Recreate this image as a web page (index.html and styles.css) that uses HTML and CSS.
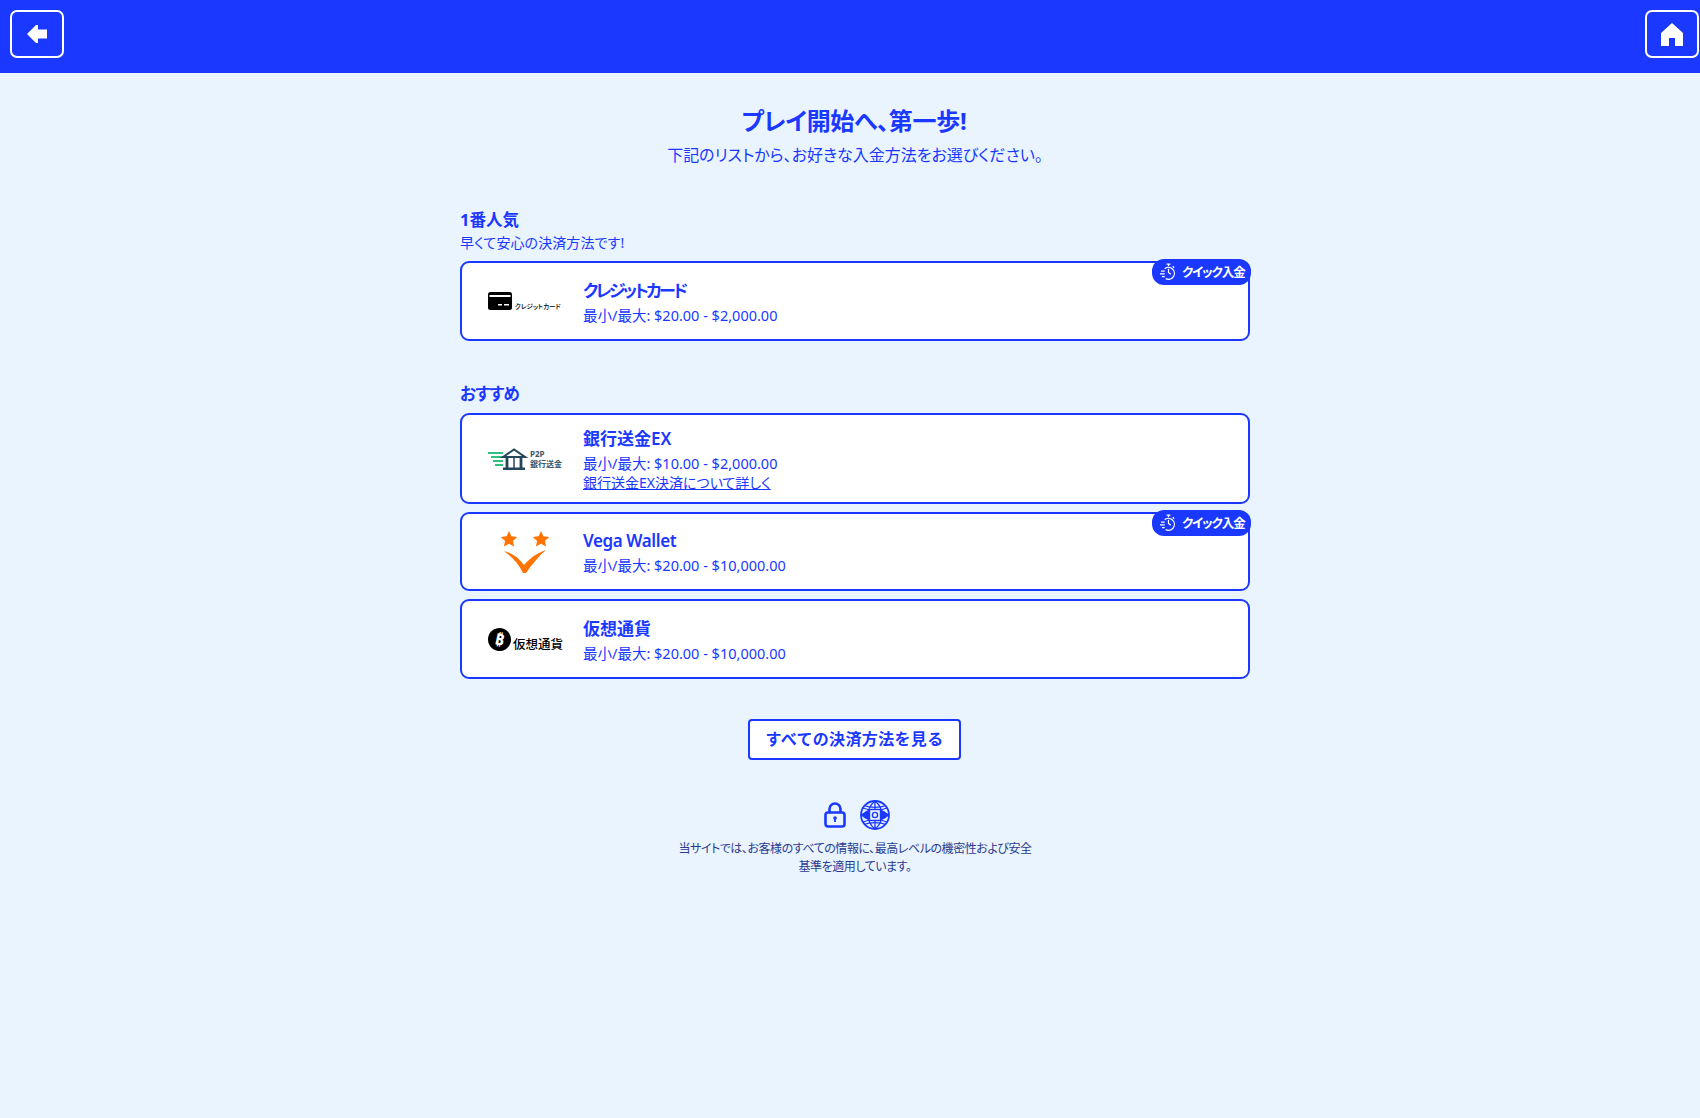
FILE: index.html
```html
<!DOCTYPE html>
<html lang="ja">
<head>
<meta charset="utf-8">
<title>入金方法</title>
<link rel="stylesheet" href="styles.css">
</head>
<body>
<header class="topbar">
  <a class="navbtn" href="#" aria-label="戻る">
    <svg class="back-icon" viewBox="0 0 20 18"><path d="M0 9 9 0h2v4.500h9v9h-9V18H9z"/></svg>
  </a>
  <a class="navbtn" href="#" aria-label="ホーム">
    <svg class="home-icon" viewBox="0 0 22 23"><path d="M11 0 22 10v13H14v-8H8v8H0V10z"/></svg>
  </a>
</header>
<main class="content">
  <section class="intro">
    <h1 class="intro-title">プレイ開始へ、第一歩!</h1>
    <p class="intro-sub">下記のリストから、お好きな入金方法をお選びください。</p>
  </section>

  <section class="group group-first">
    <h2 class="group-title">1番人気</h2>
    <p class="group-sub">早くて安心の決済方法です!</p>
    <div class="cards">
      <article class="card">
        <div class="logo">
          <div class="logo-card">
            <svg class="card-svg" viewBox="0 0 24 18"><rect width="24" height="18" rx="2.500" fill="#000"/><rect x="1.500" y="3" width="21" height="2" fill="#fff"/><rect x="10" y="12" width="4" height="1.500" fill="#fff"/><rect x="16" y="12" width="5" height="1.500" fill="#fff"/></svg>
            <span class="logo-card-text">クレジットカード</span>
          </div>
        </div>
        <div class="info">
          <h3 class="name name-kana">クレジットカード</h3>
          <p class="range">最小/最大: $20.00 - $2,000.00</p>
        </div>
        <span class="badge">
          <svg class="badge-icon" viewBox="0 0 18 18" fill="none" stroke="#fff" stroke-width="1.300"><path d="M7 1.200h4M9 1.200V3.500M13.500 3.500l1.500 1.500"/><path d="M5 6a6.300 6.300 0 1 1 1 10.500"/><path d="M9 6v4l2.500 2"/><path d="M1 8.500h4M0 11.500h5M2 14.500h3"/></svg>
          クイック入金
        </span>
      </article>
    </div>
  </section>

  <section class="group group-rec">
    <h2 class="group-title">おすすめ</h2>
    <div class="cards">
      <article class="card card-tall">
        <div class="logo">
          <div class="logo-bank">
            <svg class="bank-svg" viewBox="0 0 40 22"><g fill="#2fbf7f"><rect x="0" y="4" width="15" height="2"/><rect x="3" y="8" width="12" height="2"/><rect x="5" y="12" width="10" height="2"/><rect x="7" y="16" width="8" height="2"/></g><path d="M15 9 26 1.500 37 9z" fill="none" stroke="#24455a" stroke-width="2"/><path d="M19 10v10M33 10v10" stroke="#24455a" stroke-width="2.800"/><path d="M26 10v10" stroke="#24455a" stroke-width="1.500"/><rect x="15" y="19.500" width="22" height="2.500" fill="#24455a"/></svg>
            <span class="bank-text"><b>P2P</b><b>銀行送金</b></span>
          </div>
        </div>
        <div class="info">
          <h3 class="name">銀行送金EX</h3>
          <p class="range">最小/最大: $10.00 - $2,000.00</p>
          <a class="more" href="#">銀行送金EX決済について詳しく</a>
        </div>
      </article>
      <article class="card card-vega">
        <div class="logo">
          <svg class="vega-svg" viewBox="0 0 48 42" fill="#ff7300"><path d="M8 0l2.400 5.300 5.800.7-4.300 3.900 1.200 5.700L8 12.700l-5.100 2.900 1.200-5.700L-.2 6l5.800-.7z"/><path d="M40 0l2.400 5.300 5.800.7-4.300 3.900 1.200 5.700L40 12.700l-5.100 2.900 1.200-5.700L31.800 6l5.800-.7z"/><path d="M3 20c8 2 15 7 20 14 6-7 13-12 22-15-7 6-14 14-20 23h-3C18 33 11 26 3 20z"/></svg>
        </div>
        <div class="info">
          <h3 class="name name-latin">Vega Wallet</h3>
          <p class="range">最小/最大: $20.00 - $10,000.00</p>
        </div>
        <span class="badge">
          <svg class="badge-icon" viewBox="0 0 18 18" fill="none" stroke="#fff" stroke-width="1.300"><path d="M7 1.200h4M9 1.200V3.500M13.500 3.500l1.500 1.500"/><path d="M5 6a6.300 6.300 0 1 1 1 10.500"/><path d="M9 6v4l2.500 2"/><path d="M1 8.500h4M0 11.500h5M2 14.500h3"/></svg>
          クイック入金
        </span>
      </article>
      <article class="card">
        <div class="logo">
          <div class="logo-crypto">
            <span class="coin">₿</span>
            <span class="crypto-text">仮想通貨</span>
          </div>
        </div>
        <div class="info">
          <h3 class="name">仮想通貨</h3>
          <p class="range">最小/最大: $20.00 - $10,000.00</p>
        </div>
      </article>
    </div>
  </section>

  <div class="all-wrap"><a class="all-btn" href="#">すべての決済方法を見る</a></div>

  <section class="secure">
    <div class="secure-icons">
      <svg class="lock" viewBox="0 0 22 26" fill="none" stroke="#1a38ff" stroke-width="2.600"><rect x="1.500" y="10.500" width="19" height="14" rx="2.500"/><path d="M5.500 10.500V7a5.500 5.500 0 0 1 11 0v3.500"/><circle cx="11" cy="16" r="1.800" fill="#1a38ff" stroke="none"/><path d="M11 16.500v3.500" stroke-width="1.800"/></svg>
      <svg class="globe" viewBox="0 0 30 30" fill="none" stroke="#1a38ff" stroke-width="1.300"><circle cx="15" cy="15" r="14" stroke-width="1.800"/><path d="M15 1c-5 4-7 9-7 14s2 10 7 14M15 1c5 4 7 9 7 14s-2 10-7 14M15 1v8M15 21v8" stroke-width="1.300"/><path d="M3 8c7 3 17 3 24 0M3 22c7-3 17-3 24 0M4 5.500c6 2.500 16 2.500 22 0M4 24.500c6-2.500 16-2.500 22 0" stroke-width="1.200"/><path d="M1 15c4-4 8-6 14-6s10 2 14 6c-4 4-8 6-14 6s-10-2-14-6z" fill="#1a38ff" stroke="none"/><rect x="9.500" y="9.500" width="11" height="11" fill="#e9f4ff" stroke-width="1.400"/><circle cx="15" cy="15" r="2.600" stroke-width="1.400"/></svg>
    </div>
    <p class="secure-text">当サイトでは、お客様のすべての情報に、最高レベルの機密性および安全<br>基準を適用しています。</p>
  </section>
</main>
</body>
</html>
```
FILE: styles.css
```css
* { box-sizing: border-box; }
html, body { margin: 0; padding: 0; }
body {
  min-height: 1118px;
  background: #e9f4ff;
  color: #1a38ff;
  font-family: "Noto Sans", "Noto Sans CJK JP", sans-serif;
  font-feature-settings: "palt";
}
h1, h2, h3, p { margin: 0; }

.topbar {
  height: 73px;
  background: #1a38ff;
  display: flex;
  justify-content: space-between;
  align-items: flex-start;
  padding: 10px 1px 0 10px;
}
.navbtn {
  width: 54px;
  height: 48px;
  border: 2px solid #fff;
  border-radius: 7px;
  display: flex;
  align-items: center;
  justify-content: center;
}
.back-icon { width: 20px; height: 18px; fill: #fff; }
.home-icon { width: 22px; height: 23px; fill: #fff; }

.content { width: 790px; margin-left: 460px; padding-top: 32px; }

.intro { text-align: center; }
.intro-title { font-size: 24px; line-height: 31px; font-weight: 700; letter-spacing: -0.3px; padding-right: 2px; }
.intro-sub { font-size: 16px; line-height: 25px; margin-top: 7px; }

.group-first { margin-top: 40px; }
.group-rec { margin-top: 41px; }
.group-title { font-size: 16.500px; line-height: 24px; font-weight: 700; }
.group-sub { font-size: 14px; line-height: 21px; margin-bottom: 8px; letter-spacing: 0.1px; }
.group-rec .group-title { margin-bottom: 7px; letter-spacing: -0.7px; }

.cards { display: flex; flex-direction: column; gap: 8px; }
.card {
  position: relative;
  height: 80px;
  background: #fff;
  border: 2px solid #1a38ff;
  border-radius: 9px;
  display: flex;
  align-items: center;
}
.card-tall { height: 91px; }
.card-vega { height: 79px; }

.logo {
  width: 121px;
  padding-left: 26px;
  flex: none;
  display: flex;
  align-items: center;
}
.info { display: flex; flex-direction: column; }
.name { font-size: 17px; line-height: 25px; font-weight: 600; }
.name-kana { letter-spacing: -2.600px; }
.name-latin { letter-spacing: -0.4px; }
.range { font-size: 14.500px; line-height: 20px; margin-top: 2px; }
.more { font-size: 14px; line-height: 19px; color: #1a38ff; }

.badge {
  position: absolute;
  top: -4px;
  right: -3px;
  height: 26px;
  width: 99px;
  padding-bottom: 1px;
  background: #1a38ff;
  color: #fff;
  border-radius: 12px;
  font-size: 12.500px;
  font-weight: 700;
  letter-spacing: -1.100px;
  white-space: nowrap;
  display: flex;
  align-items: center;
  gap: 5px;
  padding-left: 8px;
}
.badge-icon { width: 17px; height: 17px; flex: none; }

.logo-card { display: flex; align-items: flex-end; gap: 3px; }
.card-svg { width: 24px; height: 18px; }
.logo-card-text { font-size: 6.500px; font-weight: 500; color: #000; white-space: nowrap; line-height: 10px; margin-bottom: -2px; }

.logo-bank { display: flex; align-items: center; gap: 2px; }
.bank-svg { width: 40px; height: 22px; }
.bank-text { display: flex; flex-direction: column; color: #3a5468; font-size: 8px; line-height: 10px; white-space: nowrap; }

.vega-svg { width: 48px; height: 42px; margin-left: 13px; }

.logo-crypto { display: flex; align-items: center; gap: 2px; padding-top: 6px; }
.coin {
  width: 23px;
  height: 23px;
  border-radius: 50%;
  background: #000;
  color: #fff;
  font-size: 16px;
  font-weight: 700;
  line-height: 23px;
  text-align: center;
  margin-top: -6px;
  transform: rotate(12deg);
}
.crypto-text { font-size: 12.500px; line-height: 14px; font-weight: 500; color: #000; white-space: nowrap; margin-top: 6px; }

.all-wrap { display: flex; justify-content: center; margin-top: 40px; padding-right: 1px; }
.all-btn {
  width: 213px;
  height: 41px;
  padding-bottom: 3px;
  background: #fff;
  border: 2px solid #1a38ff;
  border-radius: 4px;
  color: #1a38ff;
  font-size: 16px;
  font-weight: 700;
  font-feature-settings: normal;
  letter-spacing: 0.35px;
  text-decoration: none;
  display: flex;
  align-items: center;
  justify-content: center;
  white-space: nowrap;
}

.secure { margin-top: 40px; display: flex; flex-direction: column; align-items: center; }
.secure-icons { display: flex; align-items: center; gap: 14px; height: 30px; margin-left: 4px; }
.lock { width: 22px; height: 26px; }
.globe { width: 30px; height: 30px; }
.secure-text {
  margin-top: 10px;
  text-align: center;
  color: #2b3a8f;
  font-size: 12px;
  line-height: 18px;
  letter-spacing: -0.45px;
}
```
